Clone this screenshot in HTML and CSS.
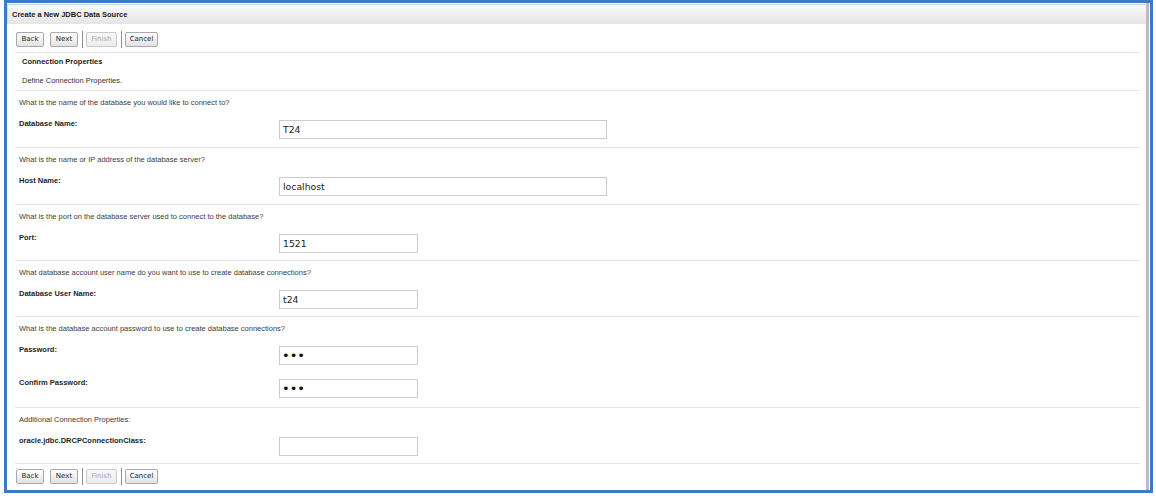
FILE: index.html
```html
<!DOCTYPE html>
<html>
<head>
<meta charset="utf-8">
<title>Create a New JDBC Data Source</title>
<link rel="stylesheet" href="styles.css">
</head>
<body>
<div class="frame">
  <div class="panel">
    <div class="titlebar">Create a New JDBC Data Source</div>
    <div class="content">
      <div class="buttonbar top">
        <button class="btn w28">Back</button>
        <button class="btn w28 gap">Next</button>
        <span class="bsep"></span>
        <button class="btn w31" disabled>Finish</button>
        <span class="bsep"></span>
        <button class="btn w33">Cancel</button>
      </div>
      <div class="intro">
        <div class="intro-title">Connection Properties</div>
        <div class="intro-desc">Define Connection Properties.</div>
      </div>

      <div class="section">
        <div class="question">What is the name of the database you would like to connect to?</div>
        <div class="row">
          <label class="label">Database Name:</label>
          <input class="field long" type="text" value="T24">
        </div>
      </div>

      <div class="section">
        <div class="question">What is the name or IP address of the database server?</div>
        <div class="row">
          <label class="label">Host Name:</label>
          <input class="field long" type="text" value="localhost">
        </div>
      </div>

      <div class="section tight">
        <div class="question">What is the port on the database server used to connect to the database?</div>
        <div class="row">
          <label class="label">Port:</label>
          <input class="field short" type="text" value="1521">
        </div>
      </div>

      <div class="section tight">
        <div class="question">What database account user name do you want to use to create database connections?</div>
        <div class="row">
          <label class="label">Database User Name:</label>
          <input class="field short" type="text" value="t24">
        </div>
      </div>

      <div class="section loose">
        <div class="question">What is the database account password to use to create database connections?</div>
        <div class="row">
          <label class="label">Password:</label>
          <input class="field short secret" type="password" value="t24">
        </div>
        <div class="row second">
          <label class="label">Confirm Password:</label>
          <input class="field short secret" type="password" value="t24">
        </div>
      </div>

      <div class="section tight">
        <div class="question">Additional Connection Properties:</div>
        <div class="row">
          <label class="label">oracle.jdbc.DRCPConnectionClass:</label>
          <input class="field short" type="text" value="">
        </div>
      </div>

      <div class="buttonbar bottom">
        <button class="btn w28">Back</button>
        <button class="btn w28 gap">Next</button>
        <span class="bsep"></span>
        <button class="btn w31" disabled>Finish</button>
        <span class="bsep"></span>
        <button class="btn w33">Cancel</button>
      </div>
    </div>
  </div>
</div>
</body>
</html>
```
FILE: styles.css
```css
html, body {
  margin: 0;
  padding: 0;
  background: #ffffff;
}

body {
  font-family: "Liberation Sans", Arial, sans-serif;
  color: #222;
}

.frame {
  margin-left: 4px;
  width: 1143px;
  height: 487px;
  border: 3px solid #3b7bc6;
}

.panel {
  box-sizing: border-box;
  height: 100%;
  margin-right: 1px;
  padding-top: 1px;
  border-right: 3px solid #bcbcbc;
}

.titlebar {
  height: 19px;
  border-top: 1px solid #d2d2d2;
  border-left: 1px solid #dcdcdc;
  background: linear-gradient(#fafafa, #e5e5e5);
  padding-left: 4px;
  font-size: 7.5px;
  font-weight: bold;
  line-height: 19px;
  color: #1a1a1a;
}

.content {
  margin: 0 6px 0 8px;
}

.buttonbar {
  display: flex;
  align-items: center;
  height: 15px;
  padding-left: 1px;
}

.buttonbar.top {
  margin-top: 8px;
  padding-bottom: 5px;
  border-bottom: 1px solid #e6e6e6;
}

.buttonbar.bottom {
  padding-top: 5px;
  border-top: 1px solid #e6e6e6;
}

.btn {
  box-sizing: border-box;
  height: 15px;
  padding: 0;
  margin: 0;
  border: 1px solid #a9a9a9;
  border-radius: 2px;
  background: linear-gradient(#ffffff, #e2e2e2);
  font-family: "DejaVu Sans", sans-serif;
  font-size: 7px;
  line-height: 13px;
  color: #1e1e1e;
  text-align: center;
}

.btn[disabled] {
  color: #a8a8a8;
  border-color: #c9c9c9;
  background: linear-gradient(#f8f8f8, #ececec);
}

.w28 { width: 28px; }
.w31 { width: 31px; }
.w33 { width: 33px; }

.btn.gap {
  margin-left: 6px;
}

.bsep {
  width: 1px;
  height: 17px;
  background: #8f8f8f;
  margin: -1px 3px -1px 4px;
}

.intro {
  padding: 4px 0 4px 7px;
}

.intro-title {
  font-size: 7.5px;
  line-height: 10px;
  font-weight: bold;
  color: #1a1a1a;
}

.intro-desc {
  margin-top: 9px;
  font-size: 7.5px;
  line-height: 10px;
  color: #333;
}

.section {
  border-top: 1px solid #e6e6e6;
  padding: 7px 0 8px 4px;
}

.section.tight {
  padding-bottom: 7px;
}

.section.loose {
  padding-bottom: 9px;
}

.question {
  font-size: 7.5px;
  line-height: 10px;
  color: #3c3c3c;
}

.row {
  display: flex;
  align-items: flex-start;
  margin-top: 12px;
}

.row.second {
  margin-top: 14px;
}

.label {
  width: 260px;
  flex: none;
  font-size: 7.5px;
  line-height: 7px;
  font-weight: bold;
  color: #1e1e1e;
}

.field {
  box-sizing: border-box;
  height: 19px;
  margin: 0;
  padding: 0 3px;
  border: 1px solid #cbcbcb;
  border-radius: 0;
  background: #fff;
  font-family: "DejaVu Sans", sans-serif;
  font-size: 9.3px;
  color: #222;
  outline: none;
}

.field.secret {
  font-size: 13px;
  padding: 0 2px;
  color: #111;
}

.field.long { width: 328px; }
.field.short { width: 139px; }
```
